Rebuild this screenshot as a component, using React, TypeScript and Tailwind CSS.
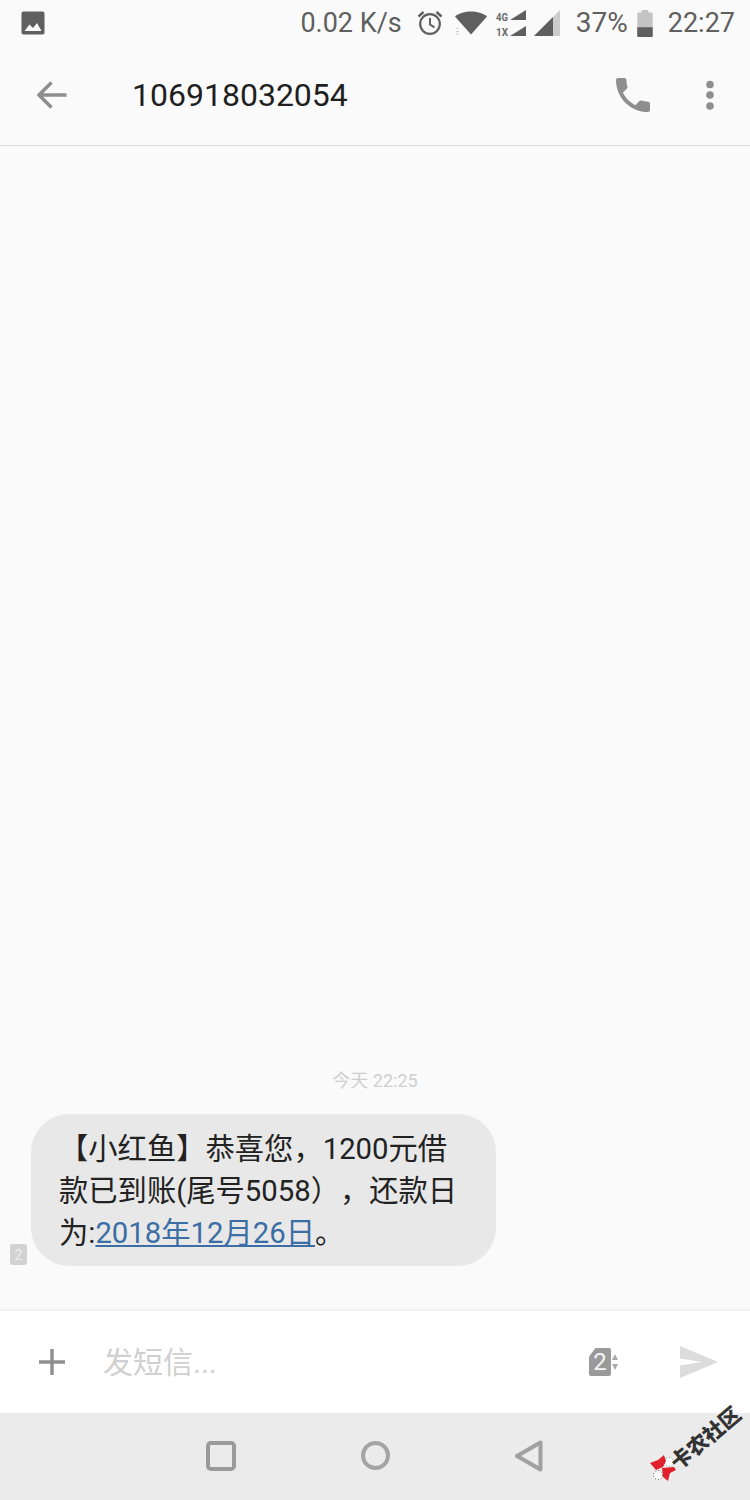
const cjk = "font-['Roboto','Noto_Sans_CJK_SC',sans-serif]";

export default function App() {
  return (
    <div className={`flex h-[1500px] w-[750px] flex-col overflow-hidden bg-[#fafafa] [text-spacing-trim:space-all] ${cjk}`}>
      {/* status bar */}
      <div className="flex h-[46px] shrink-0 items-center pl-[21px] pr-[15px] text-[27px] leading-none text-[#5f5f5f]">
        <svg width="24" height="24" viewBox="0 0 24 24" className="mt-[-1px]">
          <rect x="0.5" y="0.5" width="23" height="23" rx="2" fill="#5f5f5f" />
          <path d="M3.5 20 L8.5 13.5 L12 17 L16 12 L20.5 20 Z" fill="#fafafa" />
        </svg>
        <span className="ml-auto">0.02 K/s</span>
        <svg width="26" height="26" viewBox="0 0 26 26" className="ml-[15px]" fill="none" stroke="#5f5f5f">
          <circle cx="13" cy="14" r="9.800" strokeWidth="2.2" />
          <path d="M13 8v6.500l4.500 2.800" strokeWidth="2" />
          <path d="M1.500 6.500L6.500 2M24.500 6.500L19.500 2" strokeWidth="2.400" />
        </svg>
        <svg width="32" height="24" viewBox="0 0 32 24" className="ml-[12px]">
          <path d="M0 5.500C4 2 10 0.500 16 0.500S28 2 32 5.500L16 23.500Z" fill="#5f5f5f" />
          <path d="M1 18l1.500-2 1.500 2zM1 20h3v1H1zM1 22.500h3v1H1z" fill="#d0d0d0" />
        </svg>
        <svg width="30" height="26" viewBox="0 0 30 26" className="ml-[9px]">
          <text x="0" y="10.500" fontSize="10" fontWeight="700" textLength="12" lengthAdjust="spacingAndGlyphs" fill="#6a6a6a">4G</text>
          <text x="0" y="25.500" fontSize="10" fontWeight="700" textLength="12" lengthAdjust="spacingAndGlyphs" fill="#6a6a6a">1X</text>
          <path d="M14 10L30 0V10Z M14 26L30 16V26Z" fill="#5f5f5f" />
        </svg>
        <svg width="26" height="26" viewBox="0 0 26 26" className="ml-[8px]">
          <path d="M0 26L26 0V26Z" fill="#cccccc" />
          <path d="M0 26L19 7V26Z" fill="#5f5f5f" />
        </svg>
        <span className="ml-[16px] text-[28px]">37%</span>
        <svg width="16" height="27" viewBox="0 0 16 28" className="ml-[9px]">
          <path d="M4.500 0h7v2.500H15a1 1 0 0 1 1 1V27a1 1 0 0 1-1 1H1a1 1 0 0 1-1-1V3.500a1 1 0 0 1 1-1h3.500z" fill="#c4c4c4" />
          <path d="M0 18h16v9a1 1 0 0 1-1 1H1a1 1 0 0 1-1-1z" fill="#5f5f5f" />
        </svg>
        <span className="ml-[15px]">22:27</span>
      </div>

      {/* toolbar */}
      <div className="flex h-[100px] shrink-0 items-center border-b border-[#dcdcdc] pb-[1px] pr-[35px]">
        <svg width="30" height="28" viewBox="0 0 30 28" className="ml-[37px]" fill="none" stroke="#8e8e8e" strokeWidth="3.400">
          <path d="M29.500 14H2.500M14.500 1.500L2 14l12.500 12.500" />
        </svg>
        <span className="ml-[65px] text-[32px] leading-none text-[#1f1f1f]">106918032054</span>
        <svg width="34" height="34" viewBox="3 3 18 18" className="ml-auto">
          <path d="M6.620 10.790c1.440 2.830 3.760 5.140 6.590 6.590l2.200-2.200c.27-.27.67-.36 1.020-.24 1.120.37 2.330.57 3.570.57.55 0 1 .45 1 1V20c0 .55-.45 1-1 1-9.390 0-17-7.610-17-17 0-.55.45-1 1-1h3.500c.55 0 1 .45 1 1 0 1.250.2 2.450.57 3.570.11.35.03.74-.25 1.020l-2.200 2.200z" fill="#8e8e8e" />
        </svg>
        <svg width="10" height="30" viewBox="0 0 10 30" className="ml-[55px]">
          <circle cx="5" cy="4.500" r="3.800" fill="#8e8e8e" />
          <circle cx="5" cy="15" r="3.800" fill="#8e8e8e" />
          <circle cx="5" cy="26" r="3.800" fill="#8e8e8e" />
        </svg>
      </div>

      {/* messages */}
      <div className="flex min-h-0 flex-1 flex-col justify-end pb-[43px]">
        <div className="mb-[24px] text-center text-[18px] leading-none text-[#cfcfcf]">今天 22:25</div>
        <div className="flex items-end">
          <div className="mb-[1px] ml-[10px] flex h-[21px] w-[17px] items-center justify-center rounded-[3px] bg-[#d2d2d2] text-[14px] leading-none text-[#efefef]">2</div>
          <div className="ml-[4px] h-[152px] w-[465px] rounded-[38px] bg-[#e8e8e8] pl-[28px] pt-[14px] text-[29.3px] leading-[42px] text-[#222222]">
            <div className="whitespace-nowrap">【小红鱼】恭喜您，1200元借</div>
            <div className="whitespace-nowrap">款已到账(尾号5058），还款日</div>
            <div className="whitespace-nowrap">为:<span className="text-[#3a6ea5] underline underline-offset-2">2018年12月26日</span>。</div>
          </div>
        </div>
      </div>

      {/* composer */}
      <div className="flex h-[104px] shrink-0 items-center border-t-2 border-[#f2f2f2] bg-white pr-[32px]">
        <svg width="26" height="26" viewBox="0 0 26 26" className="ml-[39px]" fill="none" stroke="#8e8e8e" strokeWidth="3.400">
          <path d="M13 0v26M0 13h26" />
        </svg>
        <span className="ml-[38px] mt-[2px] text-[30px] leading-none text-[#d0d0d0]">发短信...</span>
        <div className="ml-auto flex h-[28px] w-[22px] items-center justify-center rounded-[2px] bg-[#9a9a9a] text-[24px] leading-none text-[#f5f5f5] [clip-path:polygon(30%_0,100%_0,100%_100%,0_100%,0_30%)]">2</div>
        <svg width="6" height="16" viewBox="0 0 6 16" className="ml-[1px]">
          <path d="M3 0L6 6H0Z M3 16L0 10H6Z" fill="#aaaaaa" />
        </svg>
        <svg width="38" height="32" viewBox="0 0 38 32" className="ml-[62px]">
          <path d="M0 0L38 16L0 32V19.500L22 16L0 12.500Z" fill="#dcdcdc" />
        </svg>
      </div>

      {/* nav */}
      <div className="relative flex h-[87px] shrink-0 items-center justify-center bg-[#ebebeb] pb-[2px]">
        <div className="ml-[-2px] flex items-center gap-[125px]">
          <div className="h-[30px] w-[30px] rounded-[5px] border-[4px] border-[#9a9a9a]" />
          <div className="h-[29px] w-[29px] rounded-full border-[4px] border-[#a4a4a4]" />
          <svg width="29" height="32" viewBox="0 0 29 32" className="ml-[-1px]" fill="none" stroke="#a0a0a0" strokeWidth="4" strokeLinejoin="round">
            <path d="M26.500 2.500V29.500L3 16Z" />
          </svg>
        </div>
        {/* watermark */}
        <svg width="26" height="26" viewBox="0 0 26 26" className="absolute left-[650px] top-[42px]">
          <circle cx="19" cy="7" r="4.500" fill="#ffffff" stroke="#2a8a8a" strokeDasharray="1 2" strokeWidth="0.800" />
          <circle cx="8" cy="20" r="4.500" fill="#ffffff" stroke="#222222" strokeDasharray="1 2" strokeWidth="0.800" />
          <path d="M0 8L8 5L14 0L16 6L13 12L6 15Z" fill="#e0202a" />
          <path d="M12 13L24 12L26 15L20 18L18 26L13 22Z" fill="#e0202a" />
        </svg>
        <span className="absolute left-[663px] top-[14px] -rotate-[40deg] whitespace-nowrap font-['Noto_Sans_CJK_SC',sans-serif] text-[21px] font-black leading-none text-[#333333]">卡农社区</span>
      </div>
    </div>
  );
}
